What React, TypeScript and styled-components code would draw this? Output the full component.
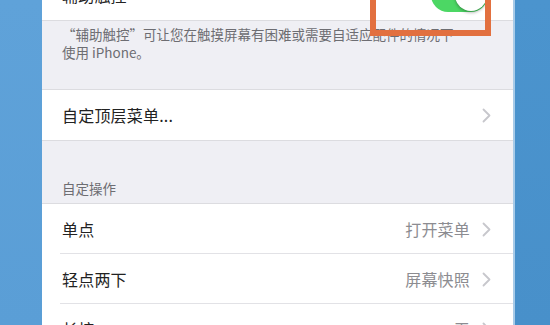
import React from "react";
import styled, { createGlobalStyle } from "styled-components";

const Global = createGlobalStyle`
  html, body { margin: 0; padding: 0; }
  body {
    width: 550px;
    height: 325px;
    overflow: hidden;
    font-family: "Noto Sans CJK SC", "Noto Sans", sans-serif;
  }
`;

const Page = styled.div`
  position: relative;
  display: flex;
  width: 550px;
  height: 325px;
  overflow: hidden;
  background: #4b93cd;
`;

const LeftBlue = styled.div`
  width: 42px;
  flex: none;
  background: linear-gradient(180deg, #5fa2d9 0%, #5a9ed6 100%);
`;

const Panel = styled.div`
  width: 471px;
  flex: none;
  display: flex;
  flex-direction: column;
  margin-top: -31px;
  background: #efeff4;
`;

const EdgeStrip = styled.div`
  width: 2px;
  flex: none;
  background: #a8cbe8;
`;

const RightBlue = styled.div`
  flex: 1;
  background: linear-gradient(180deg, #4b94ce 0%, #4890ca 100%);
`;

const Group = styled.div`
  background: #ffffff;
  border-top: 1px solid #dcdce0;
  border-bottom: 1px solid #dcdce0;
  display: flex;
  flex-direction: column;
`;

const Row = styled.div<{ $divider?: boolean }>`
  position: relative;
  height: 50px;
  display: flex;
  align-items: center;
  padding: 0 22px 0 20px;
  box-sizing: border-box;
  &::after {
    content: "";
    display: ${(p) => (p.$divider ? "block" : "none")};
    position: absolute;
    left: 18px;
    right: 0;
    bottom: 0;
    height: 1px;
    background: #e2e2e6;
  }
`;

const Label = styled.span`
  flex: 1;
  font-size: 16px;
  color: #222222;
  letter-spacing: 0.2px;
`;

const Value = styled.span`
  font-size: 16px;
  color: #8c8c91;
  margin-right: 12px;
  letter-spacing: 0.2px;
`;

const Footer = styled.div`
  padding: 5px 20px 28px 20px;
  font-size: 13.5px;
  line-height: 17.5px;
  color: #6d6d72;
`;

const Header = styled.div`
  padding: 39px 20px 6px 20px;
  font-size: 13.5px;
  line-height: 17px;
  color: #6d6d72;
`;

const Toggle = styled.div`
  position: relative;
  width: 57px;
  height: 34px;
  border-radius: 17px;
  background: #4cd764;
  margin-right: 3px;
`;

const Knob = styled.div`
  position: absolute;
  right: 1px;
  top: 1px;
  width: 32px;
  height: 32px;
  border-radius: 50%;
  background: #ffffff;
  box-shadow: 0 2px 3px rgba(0, 0, 0, 0.25), 0 0 1px rgba(0, 0, 0, 0.2);
`;

const Highlight = styled.div`
  position: absolute;
  left: 370px;
  top: -12px;
  width: 121px;
  height: 48px;
  box-sizing: border-box;
  border: 6px solid #e2703f;
`;

const Chevron = () => (
  <svg width="9" height="15" viewBox="0 0 9 15">
    <polyline
      points="1.5,1.5 7.5,7.5 1.5,13.5"
      fill="none"
      stroke="#c7c7cc"
      strokeWidth="1.8"
      strokeLinecap="round"
      strokeLinejoin="round"
    />
  </svg>
);

export default function App() {
  return (
    <>
      <Global />
      <Page>
        <LeftBlue />
        <Panel>
          <Group>
            <Row>
              <Label>辅助触控</Label>
              <Toggle>
                <Knob />
              </Toggle>
            </Row>
          </Group>
          <Footer>
            “辅助触控”可让您在触摸屏幕有困难或需要自适应配件的情况下
            <br />
            使用 iPhone。
          </Footer>
          <Group>
            <Row>
              <Label>自定顶层菜单...</Label>
              <Chevron />
            </Row>
          </Group>
          <Header>自定操作</Header>
          <Group>
            <Row $divider>
              <Label>单点</Label>
              <Value>打开菜单</Value>
              <Chevron />
            </Row>
            <Row $divider>
              <Label>轻点两下</Label>
              <Value>屏幕快照</Value>
              <Chevron />
            </Row>
            <Row>
              <Label>长按</Label>
              <Value>无</Value>
              <Chevron />
            </Row>
          </Group>
        </Panel>
        <EdgeStrip />
        <RightBlue />
        <Highlight />
      </Page>
    </>
  );
}
